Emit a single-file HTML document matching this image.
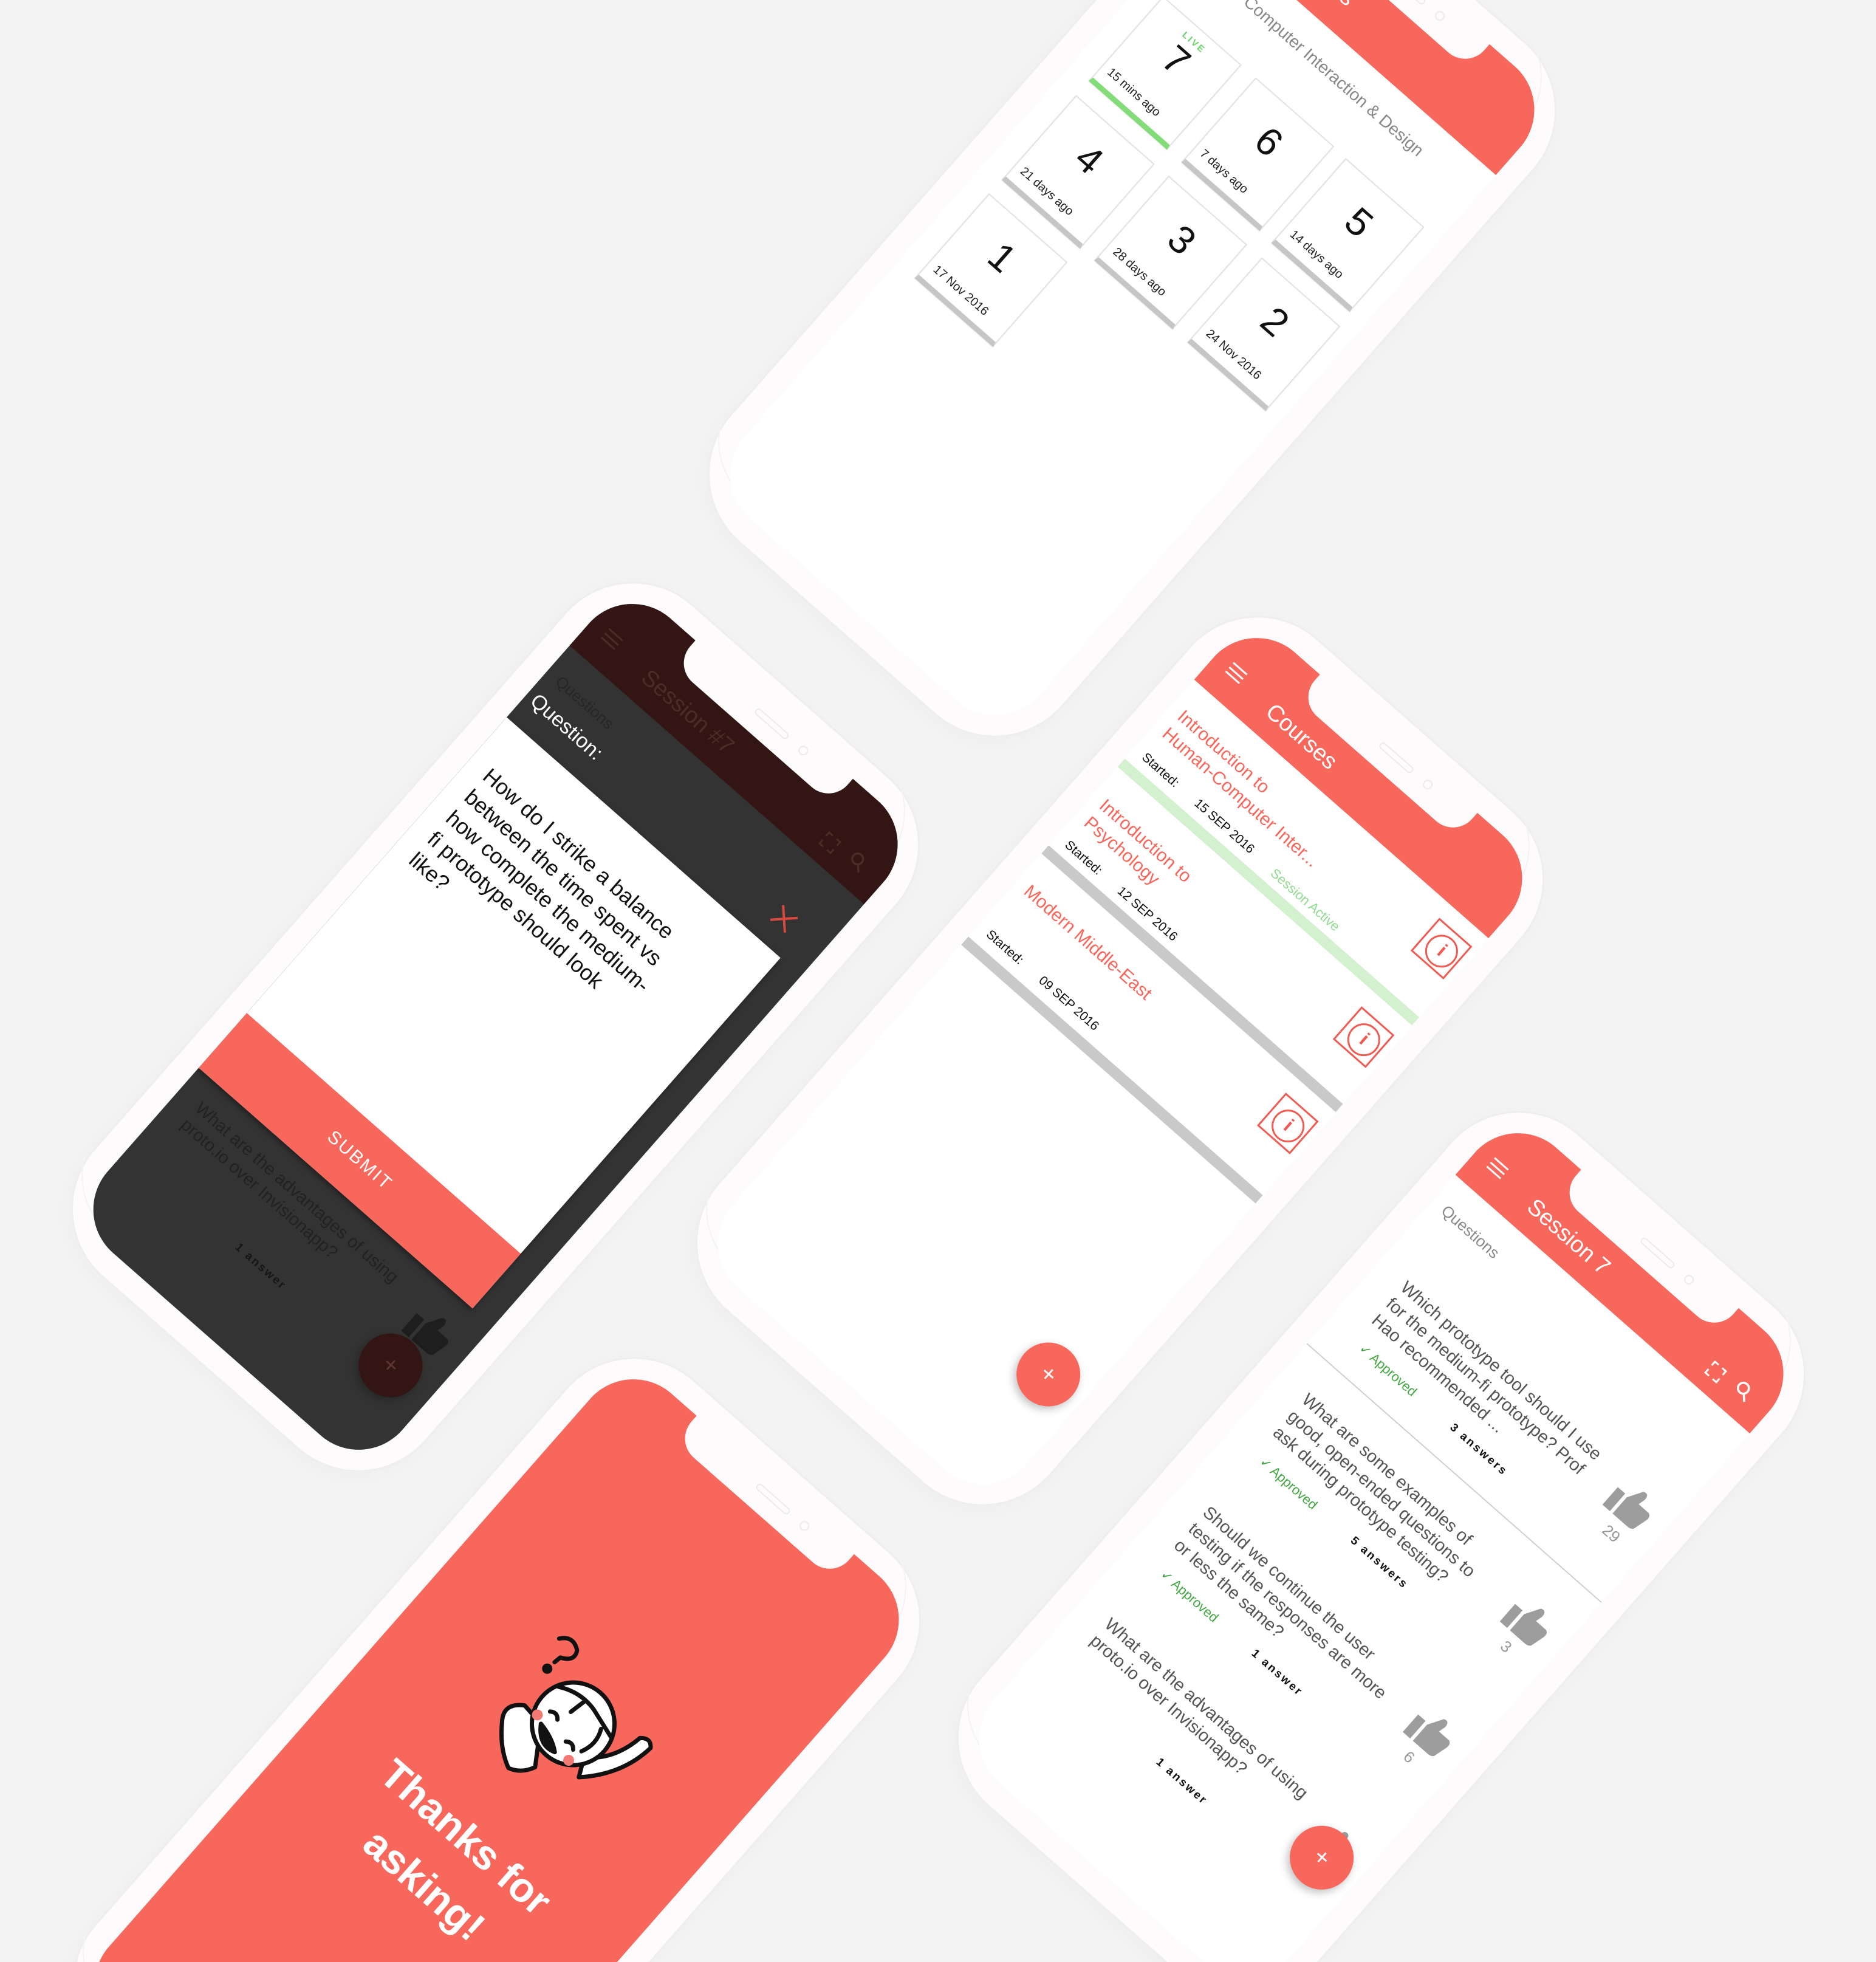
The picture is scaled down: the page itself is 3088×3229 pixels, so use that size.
<!DOCTYPE html>
<html><head><meta charset="utf-8">
<style>
*{margin:0;padding:0;box-sizing:border-box}
html,body{overflow:hidden;background:#f4f4f4;font-family:"Liberation Sans",sans-serif}
#wrap{position:relative;width:3088px;height:3229px;overflow:hidden;background:#f4f4f4}
.ph{position:absolute;width:645px;height:1390px;transform-origin:0 0;transform:rotate(41.3deg)}
.fr{position:absolute;left:-42px;top:-42px;width:729px;height:1474px;border-radius:150px;background:#fdfbfb;border:3px solid #f0eded;box-shadow:0 8px 40px rgba(0,0,0,0.03)}
.fr2{position:absolute;left:-20px;top:-20px;width:685px;height:1430px;border-radius:125px;border:2px solid #f5f2f2}
.sc{position:absolute;left:0;top:0;width:645px;height:1390px;border-radius:95px;overflow:hidden;background:#fff}
.notch{position:absolute;left:150px;top:-2px;width:345px;height:57px;background:#fdfbfb;border-radius:0 0 42px 42px;z-index:5}
.pill{position:absolute;left:150px;top:16px;width:70px;height:12px;border:2px solid #eeeaea;border-radius:6px}
.cam{position:absolute;left:245px;top:13px;width:16px;height:16px;border:2px solid #eeeaea;border-radius:50%}
.hd{position:absolute;left:0;top:0;width:645px;height:143px;background:#f8675c}
.ham{position:absolute;left:30px;top:78px;width:30px;height:22px;border-top:3px solid #fff;border-bottom:3px solid #fff}
.ham:after{content:"";position:absolute;left:0;top:6.5px;width:30px;border-top:3px solid #fff}
.ham.dk{border-color:#4e2b29}
.ham.dk:after{border-color:#4e2b29}
.ht{position:absolute;left:124px;top:76px;font-size:38px;color:#fff;white-space:nowrap}
.ab{position:absolute;white-space:nowrap}
.red{color:#f8675c}
.fab{position:absolute;width:105px;height:105px;border-radius:50%;background:#f8675c;color:#fff;font-size:40px;text-align:center;line-height:105px;box-shadow:0 6px 14px rgba(0,0,0,0.25)}
.info{position:absolute;width:72px;height:72px;border:3px solid #f05a50}
.info:after{content:"i";position:absolute;left:9px;top:9px;width:48px;height:48px;border:3px solid #f05a50;border-radius:50%;color:#f05a50;font-size:32px;font-weight:bold;text-align:center;line-height:44px}
.q{position:absolute;left:55px;font-size:29px;line-height:36px;color:#555;white-space:nowrap}
.appr{position:absolute;left:70px;font-size:22px;color:#43a843;white-space:nowrap}
.ans{position:absolute;left:268px;font-size:19px;font-weight:bold;letter-spacing:3px;color:#111;white-space:nowrap}
.cnt{position:absolute;left:568px;font-size:26px;color:#999}
.card{position:absolute;width:172px;height:186px;background:#fff;border:2px solid #e2e2e2;border-bottom:9px solid #c6c6c6;box-shadow:0 1px 2px rgba(0,0,0,0.08)}
.card .n{position:absolute;left:0;right:0;top:26px;text-align:center;font-size:64px;color:#111}
.card .d{position:absolute;left:12px;bottom:14px;font-size:20px;color:#222;white-space:nowrap}
</style></head><body><div id="wrap">

<div class="ph" style="left:2080px;top:-254px">
 <div class="fr"><div class="fr2"></div></div>
 <div class="sc">
  <div class="hd" style="height:155px"><div class="ham"></div><div class="ht">Sessions</div></div>
  <div class="ab" style="left:46px;top:193px;font-size:28px;color:#888">Human-Computer Interaction &amp; Design</div>
  <div class="card" style="left:39px;top:295px;border-bottom-color:#82dc78"><div class="ab" style="left:64px;top:14px;font-size:15px;color:#6bd46b;letter-spacing:3px;font-weight:bold">LIVE</div><div class="n">7</div><div class="d">15 mins ago</div></div>
  <div class="card" style="left:242px;top:295px"><div class="n">6</div><div class="d">7 days ago</div></div>
  <div class="card" style="left:441px;top:297px"><div class="n">5</div><div class="d">14 days ago</div></div>
  <div class="card" style="left:39px;top:512px"><div class="n">4</div><div class="d">21 days ago</div></div>
  <div class="card" style="left:241px;top:511px"><div class="n">3</div><div class="d">28 days ago</div></div>
  <div class="card" style="left:445px;top:511px"><div class="n">2</div><div class="d">24 Nov 2016</div></div>
  <div class="card" style="left:38px;top:728px"><div class="n">1</div><div class="d">17 Nov 2016</div></div>
 </div>
 <div class="notch"><div class="pill"></div><div class="cam"></div></div>
</div>

<div class="ph" style="left:2060px;top:1011px">
 <div class="fr"><div class="fr2"></div></div>
 <div class="sc">
  <div class="hd"><div class="ham"></div><div class="ht">Courses</div></div>
  <div class="ab red" style="left:20px;top:182px;font-size:30px;line-height:38px">Introduction to<br>Human-Computer Inter...</div>
  <div class="ab" style="left:20px;top:280px;font-size:21px;color:#111">Started:</div>
  <div class="ab" style="left:135px;top:280px;font-size:21px;color:#111">15 SEP 2016</div>
  <div class="ab" style="left:305px;top:282px;font-size:22px;color:#8fdc8f">Session Active</div>
  <div class="ab" style="left:0;top:316px;width:645px;height:18px;background:#d3f1cf"></div>
  <div class="info" style="left:562px;top:171px"></div>
  <div class="ab red" style="left:20px;top:377px;font-size:30px;line-height:38px">Introduction to<br>Psychology</div>
  <div class="ab" style="left:20px;top:472px;font-size:21px;color:#111">Started:</div>
  <div class="ab" style="left:135px;top:472px;font-size:21px;color:#111">12 SEP 2016</div>
  <div class="ab" style="left:0;top:506px;width:645px;height:18px;background:#c9c9c9"></div>
  <div class="info" style="left:562px;top:365px"></div>
  <div class="ab red" style="left:20px;top:565px;font-size:30px;line-height:38px">Modern Middle-East</div>
  <div class="ab" style="left:20px;top:668px;font-size:21px;color:#111">Started:</div>
  <div class="ab" style="left:135px;top:668px;font-size:21px;color:#111">09 SEP 2016</div>
  <div class="ab" style="left:0;top:706px;width:645px;height:18px;background:#c9c9c9"></div>
  <div class="info" style="left:562px;top:554px"></div>
  <div class="fab" style="left:522px;top:1108px">+</div>
 </div>
 <div class="notch"><div class="pill"></div><div class="cam"></div></div>
</div>

<div class="ph" style="left:2490px;top:1826px">
 <div class="fr"><div class="fr2"></div></div>
 <div class="sc">
  <div class="hd"><div class="ham"></div><div class="ht">Session 7</div>
   <svg class="ab" style="left:520px;top:88px" width="32" height="32" viewBox="0 0 32 32" fill="none" stroke="#fff" stroke-width="3"><path d="M4 12V4h8M20 4h8v8M28 20v8h-8M12 28H4v-8"/></svg>
   <svg class="ab" style="left:574px;top:80px" width="34" height="34" viewBox="0 0 34 34" fill="none" stroke="#fff" stroke-width="3.5"><circle cx="14" cy="14" r="9"/><path d="M21 21l9 9"/></svg>
  </div>
  <div class="ab" style="left:22px;top:182px;font-size:26px;color:#8a8a8a">Questions</div>
  <div class="q" style="top:318px">Which prototype tool should I use<br>for the medium-fi prototype? Prof<br>Hao recommended ...</div>
  <div class="appr" style="top:445px">✓ Approved</div><div class="ans" style="top:447px">3 answers</div>
  <svg class="ab" style="left:540px;top:326px" width="74" height="68" viewBox="0 0 50 46" fill="#9d9d9d"><rect x="0" y="18" width="11" height="26"/><path d="M15 20 L25 3 Q32 0 32 9 L30 17 L45 17 Q50 19 48 26 L44 41 Q42 44 37 44 L15 44 Z"/></svg>
  <div class="cnt" style="top:402px">29</div>
  <div class="ab" style="left:0;top:512px;width:645px;height:2px;background:#cfcfcf"></div>
  <div class="q" style="top:564px">What are some examples of<br>good, open-ended questions to<br>ask during prototype testing?</div>
  <div class="appr" style="top:693px">✓ Approved</div><div class="ans" style="top:695px">5 answers</div>
  <svg class="ab" style="left:540px;top:582px" width="74" height="68" viewBox="0 0 50 46" fill="#9d9d9d"><rect x="0" y="18" width="11" height="26"/><path d="M15 20 L25 3 Q32 0 32 9 L30 17 L45 17 Q50 19 48 26 L44 41 Q42 44 37 44 L15 44 Z"/></svg>
  <div class="cnt" style="top:656px">3</div>
  <div class="q" style="top:811px">Should we continue the user<br>testing if the responses are more<br>or less the same?</div>
  <div class="appr" style="top:940px">✓ Approved</div><div class="ans" style="top:942px">1 answer</div>
  <svg class="ab" style="left:540px;top:824px" width="74" height="68" viewBox="0 0 50 46" fill="#9d9d9d"><rect x="0" y="18" width="11" height="26"/><path d="M15 20 L25 3 Q32 0 32 9 L30 17 L45 17 Q50 19 48 26 L44 41 Q42 44 37 44 L15 44 Z"/></svg>
  <div class="cnt" style="top:898px">6</div>
  <div class="q" style="top:1056px">What are the advantages of using<br>proto.io over Invisionapp?</div>
  <div class="ans" style="top:1180px">1 answer</div>
  <svg class="ab" style="left:540px;top:1071px" width="74" height="68" viewBox="0 0 50 46" fill="#9d9d9d"><rect x="0" y="18" width="11" height="26"/><path d="M15 20 L25 3 Q32 0 32 9 L30 17 L45 17 Q50 19 48 26 L44 41 Q42 44 37 44 L15 44 Z"/></svg>
  <div class="fab" style="left:524px;top:1080px">+</div>
 </div>
 <div class="notch"><div class="pill"></div><div class="cam"></div></div>
</div>

<div class="ph" style="left:1032px;top:955px">
 <div class="fr"><div class="fr2"></div></div>
 <div class="sc" style="background:#333">
  <div class="hd" style="background:#331514"><div class="ham dk"></div><div class="ht" style="color:#4e2b29">Session #7</div>
   <svg class="ab" style="left:520px;top:88px" width="32" height="32" viewBox="0 0 32 32" fill="none" stroke="#4e2b29" stroke-width="3"><path d="M4 12V4h8M20 4h8v8M28 20v8h-8M12 28H4v-8"/></svg>
   <svg class="ab" style="left:574px;top:80px" width="34" height="34" viewBox="0 0 34 34" fill="none" stroke="#4e2b29" stroke-width="3.5"><circle cx="14" cy="14" r="9"/><path d="M21 21l9 9"/></svg>
  </div>
  <div class="ab" style="left:22px;top:182px;font-size:26px;color:#262626">Questions</div>
  <div class="ab" style="left:12px;top:228px;font-size:34px;color:#fff">Question:</div>
  <svg class="ab" style="left:540px;top:226px" width="44" height="44" viewBox="0 0 44 44" stroke="#d84a40" stroke-width="4"><path d="M6 6L38 38M38 6L6 38"/></svg>
  <div class="ab" style="left:0;top:300px;width:600px;height:768px;background:#fff;box-shadow:0 4px 10px rgba(0,0,0,0.4)">
   <div class="ab" style="left:35px;top:68px;font-size:36px;line-height:46px;color:#111">How do I strike a balance<br>between the time spent vs<br>how complete the medium-<br>fi prototype should look<br>like?</div>
   <div class="ab" style="left:0;top:648px;width:600px;height:120px;background:#f8675c;color:#fff;font-size:30px;letter-spacing:3px;text-align:center;line-height:120px">SUBMIT</div>
  </div>
  <div class="ab" style="left:40px;top:1098px;font-size:29px;line-height:36px;color:#222">What are the advantages of using<br>proto.io over Invisionapp?</div>
  <div class="ab" style="left:240px;top:1236px;font-size:19px;font-weight:bold;letter-spacing:3px;color:#151515">1 answer</div>
  <svg class="ab" style="left:536px;top:1108px" width="74" height="68" viewBox="0 0 50 46" fill="#1e1e1e"><rect x="0" y="18" width="11" height="26"/><path d="M15 20 L25 3 Q32 0 32 9 L30 17 L45 17 Q50 19 48 26 L44 41 Q42 44 37 44 L15 44 Z"/></svg>
  <div class="fab" style="left:508px;top:1175px;background:#331514;color:#5e3532">+</div>
 </div>
 <div class="notch"><div class="pill"></div><div class="cam"></div></div>
</div>

<div class="ph" style="left:1034px;top:2231px">
 <div class="fr"><div class="fr2"></div></div>
 <div class="sc" style="background:#f8675c">
  <svg class="ab" style="left:182px;top:375px" width="280" height="280" viewBox="0 0 280 280" fill="none" stroke="#111" stroke-width="7" stroke-linejoin="round" stroke-linecap="round">
   <path d="M60 215 Q40 190 70 170 L110 175 L150 235 Q140 258 118 265 Q85 250 60 215Z" fill="#fff"/>
   <path d="M200 170 Q240 140 248 85 Q262 72 272 86 Q266 150 215 200Z" fill="#fff"/>
   <circle cx="150" cy="140" r="68" fill="#fff"/>
   <path d="M92 110 Q125 92 160 100 L210 115"/>
   <path d="M140 98 L134 128"/>
   <path d="M190 116 Q202 140 190 165"/>
   <path d="M108 150 Q118 142 126 152"/>
   <path d="M160 170 Q170 162 178 172"/>
   <path d="M110 175 Q130 205 158 195 Q140 180 110 175Z" fill="#111"/>
   <circle cx="96" cy="168" r="9" fill="#f37a74" stroke="none"/>
   <circle cx="184" cy="190" r="9" fill="#f37a74" stroke="none"/>
   <path d="M40 50 Q55 30 75 45 Q85 62 62 72 L60 84"/>
   <circle cx="58" cy="100" r="5" fill="#111"/>
  </svg>
  <div class="ab" style="left:0;width:645px;top:720px;text-align:center;font-size:68px;font-weight:bold;color:#fff;line-height:104px">Thanks for<br>asking!</div>
 </div>
 <div class="notch"><div class="pill"></div><div class="cam"></div></div>
</div>

</div></body></html>
